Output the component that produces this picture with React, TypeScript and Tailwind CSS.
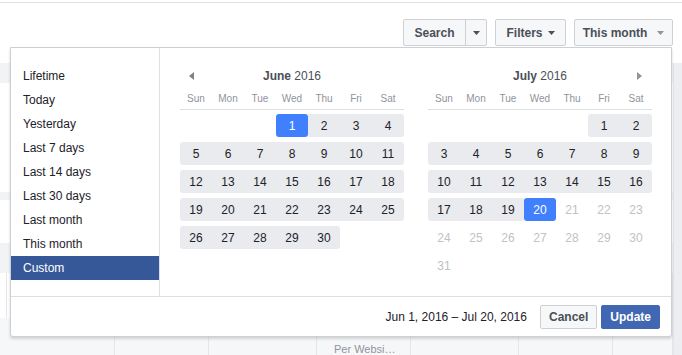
import React from 'react';

type Month = {
  name: string;
  start: number;
  days: number;
  rangeTo: number;
  selected: number;
  arrow: 'prev' | 'next';
};

const months: Month[] = [
  { name: 'June', start: 3, days: 30, rangeTo: 30, selected: 1, arrow: 'prev' },
  { name: 'July', start: 5, days: 31, rangeTo: 20, selected: 20, arrow: 'next' },
];

const presets = [
  'Lifetime',
  'Today',
  'Yesterday',
  'Last 7 days',
  'Last 14 days',
  'Last 30 days',
  'Last month',
  'This month',
  'Custom',
];

const dayNames = ['Sun', 'Mon', 'Tue', 'Wed', 'Thu', 'Fri', 'Sat'];

function weeks(m: Month) {
  const cells: (number | null)[] = [];
  for (let i = 0; i < m.start; i++) cells.push(null);
  for (let d = 1; d <= m.days; d++) cells.push(d);
  while (cells.length % 7) cells.push(null);
  const rows: (number | null)[][] = [];
  for (let i = 0; i < cells.length; i += 7) rows.push(cells.slice(i, i + 7));
  return rows;
}

function Caret({ light }: { light?: boolean }) {
  return (
    <svg width="7" height="4" viewBox="0 0 7 4" className="shrink-0">
      <path d="M0 0h7L3.5 4z" fill={light ? '#90949c' : '#4b4f56'} />
    </svg>
  );
}

function MonthGrid({ m }: { m: Month }) {
  const inRange = (d: number | null) => d !== null && d <= m.rangeTo;
  return (
    <div className="w-[224px]">
      <div className="flex items-center h-[16px]">
        <div className="w-[24px] flex">
          {m.arrow === 'prev' && (
            <svg width="5" height="8" viewBox="0 0 5 8" className="ml-[9px]">
              <path d="M5 0v8L0 4z" fill="#7f8389" />
            </svg>
          )}
        </div>
        <div className="flex-1 text-center text-[12px] text-[#4b4f56] leading-[16px]">
          <span className="font-bold">{m.name}</span> 2016
        </div>
        <div className="w-[24px] flex justify-end">
          {m.arrow === 'next' && (
            <svg width="5" height="8" viewBox="0 0 5 8" className="mr-[10px]">
              <path d="M0 0v8l5-4z" fill="#90949c" />
            </svg>
          )}
        </div>
      </div>
      <div className="mt-[7px] h-[19px] flex border-b border-[#dddfe2]">
        {dayNames.map((n) => (
          <div key={n} className="w-[32px] text-center text-[10px] leading-[16px] text-[#90949c]">
            {n}
          </div>
        ))}
      </div>
      <div className="mt-[4px] flex flex-col gap-[5px]">
        {weeks(m).map((row, ri) => (
          <div key={ri} className="flex h-[23px]">
            {row.map((d, c) => {
              if (d === null) return <div key={c} className="w-[32px]" />;
              let cls = 'text-[#bec2c9]';
              if (d === m.selected) {
                cls = 'bg-[#4080ff] text-white rounded-[3px]';
              } else if (inRange(d)) {
                const prev = c > 0 ? row[c - 1] : null;
                const next = c < 6 ? row[c + 1] : null;
                const roundL = !inRange(prev) && prev !== m.selected;
                const roundR = !inRange(next) && next !== m.selected;
                cls =
                  'bg-[#e9ebee] text-[#1d2129]' +
                  (roundL ? ' rounded-l-[3px]' : '') +
                  (roundR ? ' rounded-r-[3px]' : '');
              }
              return (
                <div
                  key={c}
                  className={'w-[32px] flex items-center justify-center text-[12px] ' + cls}
                >
                  {d}
                </div>
              );
            })}
          </div>
        ))}
      </div>
    </div>
  );
}

export default function App() {
  return (
    <div className="relative w-[682px] h-[355px] overflow-hidden bg-white font-['Liberation_Sans',Arial,sans-serif]">
      {/* page behind the popup */}
      <div className="h-[3px] border-b border-[#dddfe2]" />
      <div className="flex justify-end gap-2 pr-[9px] pt-[16px]">
        <div className="flex h-[27px] w-[84px] rounded-[2px] border border-[#ced0d4] bg-[#f6f7f9] text-[12px] font-bold text-[#4b4f56]">
          <div className="flex-1 flex items-center justify-center">Search</div>
          <div className="w-[21px] border-l border-[#ced0d4] flex items-center justify-center">
            <Caret />
          </div>
        </div>
        <div className="flex h-[27px] w-[71px] items-center justify-center gap-[5px] rounded-[2px] border border-[#ced0d4] bg-[#f6f7f9] text-[12px] font-bold text-[#4b4f56]">
          Filters
          <Caret />
        </div>
        <div className="flex h-[27px] w-[99px] items-center justify-center gap-[10px] rounded-[2px] border border-[#ced0d4] bg-[#f6f7f9] text-[12px] font-bold text-[#4b4f56]">
          This month
          <Caret light />
        </div>
      </div>
      <div className="flex mt-[17px]">
        <div className="flex-1 flex flex-col">
          <div className="h-[20px] bg-[#f2f3f5]" />
          <div className="h-[109px]" />
          <div className="h-[8px] bg-[#f2f3f5]" />
          <div className="h-[43px]" />
          <div className="h-[30px] bg-[#f2f3f5]" />
          <div className="grid grid-cols-[7px_108px_94px_108px_94px_108px_94px_1fr] h-[82px]">
            {Array.from({ length: 8 }).map((_, i) => (
              <div key={i} className="flex flex-col border-r border-[#e5e6e9]">
                <div className="h-[45px]" />
                <div className="flex-1 bg-[#f6f7f9] pl-[17px] pt-[24px] text-[11px] leading-[14px] text-[#90949c] whitespace-nowrap overflow-hidden">
                  {i === 4 ? 'Per Websi…' : ''}
                </div>
              </div>
            ))}
          </div>
        </div>
        <div className="w-[9px] bg-[#eceef1] border-l border-[#e5e6e9]" />
      </div>

      {/* date range popup */}
      <div className="absolute left-[10px] top-[47px] w-[662px] h-[290px] flex flex-col rounded-b-[3px] border border-[#ccd0d5] bg-white shadow-[0_2px_3px_rgba(0,0,0,0.15)]">
        <div className="flex h-[248px]">
          <div className="w-[149px] border-r border-[#dddfe2] pt-[16px]">
            {presets.map((p) => (
              <div
                key={p}
                className={
                  'h-[24px] pl-[12px] flex items-center text-[12px] ' +
                  (p === 'Custom' ? 'bg-[#365899] text-white' : 'text-[#1d2129]')
                }
              >
                {p}
              </div>
            ))}
          </div>
          <div className="flex-1 flex gap-[24px] pl-[20px] pt-[20px]">
            {months.map((m) => (
              <MonthGrid key={m.name} m={m} />
            ))}
          </div>
        </div>
        <div className="h-[40px] border-t border-[#dddfe2] flex items-center justify-end pr-[11px]">
          <span className="text-[12px] text-[#1d2129] mr-[13px]">Jun 1, 2016 – Jul 20, 2016</span>
          <button className="h-[24px] px-[8px] rounded-[2px] border border-[#ced0d4] bg-[#f6f7f9] text-[12px] font-bold text-[#4b4f56]">
            Cancel
          </button>
          <button className="ml-[4px] h-[24px] px-[8px] rounded-[2px] border border-[#4267b2] bg-[#4267b2] text-[12px] font-bold text-white">
            Update
          </button>
        </div>
      </div>
    </div>
  );
}
